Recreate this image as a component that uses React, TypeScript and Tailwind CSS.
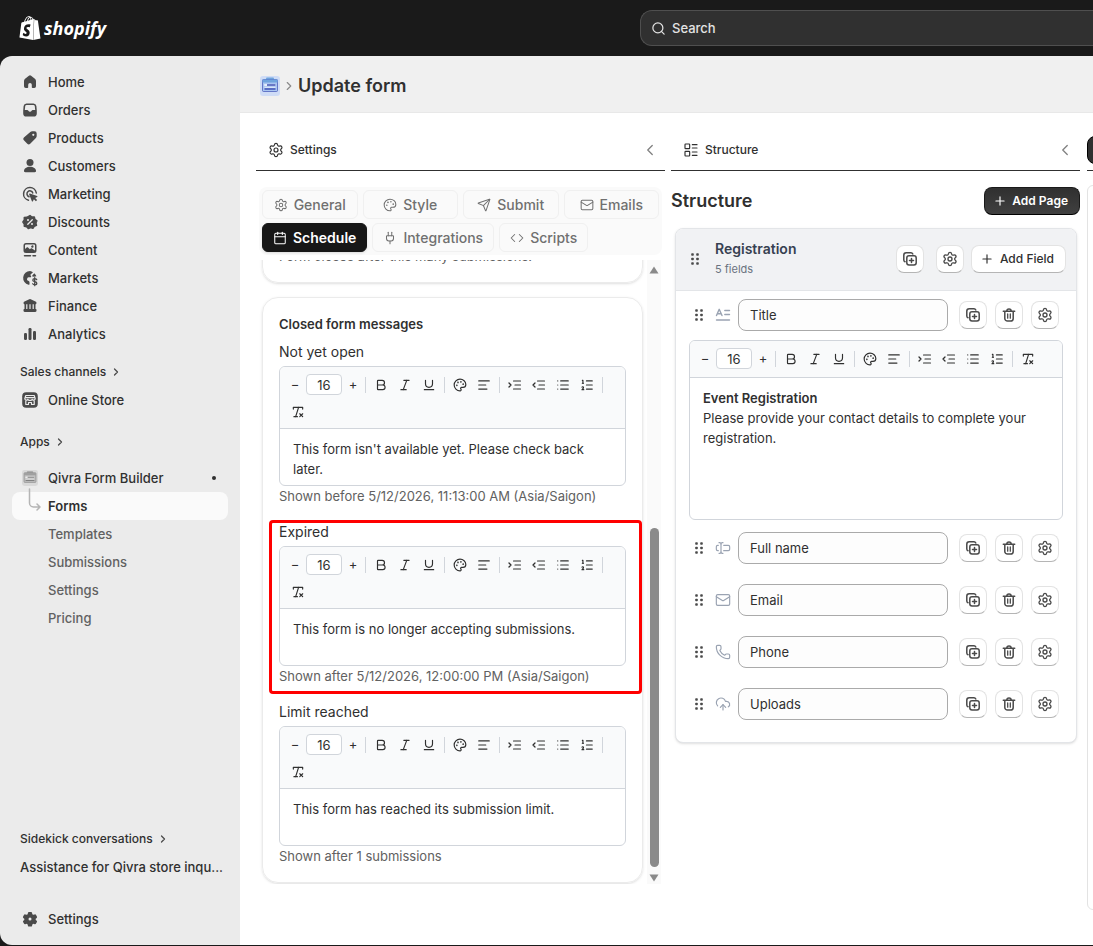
import type { ReactNode } from 'react'
import {
  Bold,
  Calendar,
  ChevronLeft,
  ChevronRight,
  CloudUpload,
  Code,
  Italic,
  LayoutList,
  List,
  ListOrdered,
  Mail,
  Palette,
  Phone,
  Plug,
  Plus,
  RemoveFormatting,
  Search,
  Send,
  Settings,
  TextAlignStart,
  TextCursorInput,
  Underline,
} from 'lucide-react'
import { SiShopify } from 'react-icons/si'

const navIcons: Record<string, ReactNode> = {
  Home: (
    <path d="M8.900 3.700a1.700 1.700 0 0 1 2.200 0l3.800 3.100c.7.600 1.100 1.400 1.100 2.300v5.200a1.700 1.700 0 0 1-1.700 1.700h-1.700a.8.8 0 0 1-.8-.8v-2.400a1.800 1.800 0 0 0-3.600 0v2.400a.8.8 0 0 1-.8.8H5.700A1.700 1.700 0 0 1 4 14.300V9.100c0-.9.4-1.700 1.100-2.300z" />
  ),
  Orders: (
    <path
      fillRule="evenodd"
      d="M6.500 3.500h7a3 3 0 0 1 2.900 2.500l.4 4.500v3a3.100 3.100 0 0 1-3.100 3.100H6.300a3.100 3.100 0 0 1-3.100-3.100v-3L3.600 6a3 3 0 0 1 2.900-2.500zm.2 1.500a1.500 1.500 0 0 0-1.500 1.300L4.800 10h2.400c.6 0 .9.300 1.200.8.300.6.800 1 1.600 1s1.300-.4 1.600-1c.3-.5.6-.8 1.200-.8h2.400l-.4-3.700A1.500 1.500 0 0 0 13.300 5z"
    />
  ),
  Products: (
    <path
      fillRule="evenodd"
      d="M10.300 4.100a2.800 2.800 0 0 1 2-.8h2.200A2.200 2.200 0 0 1 16.700 5.500v2.600a2.800 2.800 0 0 1-.8 2l-5.700 5.700a2 2 0 0 1-2.900 0l-3.400-3.500a2 2 0 0 1 0-2.900zM13.300 7.900a1.100 1.100 0 1 0 0-2.200 1.100 1.100 0 0 0 0 2.200z"
    />
  ),
  Customers: (
    <>
      <circle cx="10" cy="6.500" r="3.500" />
      <path d="M4 15c0-2.600 2.700-4.200 6-4.200s6 1.600 6 4.200c0 .8-.6 1.200-1.300 1.200H5.300C4.600 16.200 4 15.800 4 15z" />
    </>
  ),
  Marketing: (
    <>
      <path d="M8.500 16.200A6.400 6.400 0 1 1 16.300 9" fill="none" stroke="currentColor" strokeWidth="1.500" strokeLinecap="round" />
      <path d="M9 12.700A3 3 0 1 1 12.800 8.900" fill="none" stroke="currentColor" strokeWidth="1.500" strokeLinecap="round" />
      <path d="M9.800 9.500l7.300 2.500c.5.200.5.800.1 1l-2 1 1.900 2-1.200 1.200-2-1.900-1 2c-.2.4-.9.400-1-.1L9.100 10.200c-.1-.4.300-.8.7-.7z" />
    </>
  ),
  Discounts: (
    <>
      <path
        d="M10 3.600l1.900 1.500 2.400-.1.600 2.400 2 1.400-1 2.200.6 2.400-2.300.9-1.300 2-2.300-.7-2.300 1-1.600-1.900-2.400-.4V12l-1.400-2 1.400-2V5.600l2.500-.3z"
        stroke="currentColor"
        strokeWidth="1.500"
        strokeLinejoin="round"
      />
      <path d="M7.800 12.300l4.500-4.600" stroke="#ebebeb" strokeWidth="1.300" strokeLinecap="round" />
      <circle cx="8" cy="8" r="1" fill="#ebebeb" />
      <circle cx="12" cy="12" r="1" fill="#ebebeb" />
    </>
  ),
  Content: (
    <>
      <path
        fillRule="evenodd"
        d="M6 3h8a2.500 2.500 0 0 1 2.500 2.500v5A2.500 2.500 0 0 1 14 13H6a2.500 2.500 0 0 1-2.500-2.500v-5A2.500 2.500 0 0 1 6 3zm0 1.500a1 1 0 0 0-1 1V9l1.700-1.500c.4-.3.900-.3 1.300 0l1.800 1.800 1-.9c.4-.3.900-.3 1.200 0L15 10.500v-5a1 1 0 0 0-1-1zm6 3.200a1.200 1.200 0 1 0 0-2.300 1.200 1.200 0 0 0 0 2.300z"
      />
      <path d="M4.500 15.700h6M13 15.700h2.500" stroke="currentColor" strokeWidth="1.500" strokeLinecap="round" />
    </>
  ),
  Markets: (
    <>
      <path d="M10 3a7 7 0 0 0-1.500 13.800c.7.100 1-.3 1-.9v-1.600c0-.6-.3-1-.8-1.300l-1-.5a1.300 1.300 0 0 1-.6-1.600l.3-.8c.2-.5.700-.8 1.200-.8h1.900c.7 0 .9-.8.500-1.300l-.4-.5c-.3-.4-.2-.9.200-1.200L13 4.200A7 7 0 0 0 10 3z" />
      <path d="M14.300 5.200L12.300 7.500c-.3.400 0 1 .5 1.100l1.200.2 2.400-.5a7 7 0 0 0-2.100-3.100z" />
      <path d="M16.700 11.600c-.4-.6-1.100-.9-2-.9-1 0-1.900.5-1.900 1.500 0 2 4 1 4 3 0 1-.9 1.600-2 1.600-.9 0-1.700-.4-2.100-1.100M14.700 9.700v8" fill="none" stroke="currentColor" strokeWidth="1.300" strokeLinecap="round" />
    </>
  ),
  Finance: (
    <path
      fillRule="evenodd"
      d="M9.300 3.200a1.700 1.700 0 0 1 1.400 0l4.800 2.300c.6.300 1 .8 1 1.400 0 .7-.5 1.200-1 1.300V13h.3c.4 0 .7.300.7.700v1.100c0 .7-.5 1.200-1.200 1.200H4.700c-.7 0-1.200-.5-1.200-1.200v-1.100c0-.4.3-.7.700-.7h.3V8.200c-.5-.1-1-.6-1-1.300 0-.6.4-1.100 1-1.400zM6.200 8.300V13h1.200V8.300zm3.200 0V13h1.200V8.300zm3.200 0V13h1.200V8.300z"
    />
  ),
  Analytics: (
    <>
      <rect x="4" y="9" width="3" height="7" rx="1.200" />
      <rect x="8.500" y="4" width="3" height="12" rx="1.200" />
      <rect x="13" y="7" width="3" height="9" rx="1.200" />
    </>
  ),
  'Online Store': (
    <>
      <rect x="2.200" y="2.200" width="15.600" height="15.600" rx="4" />
      <path
        d="M5.800 5.500h8.400l1 3.200a1.600 1.600 0 0 1-3 .6 1.700 1.700 0 0 1-2.200 1 1.700 1.700 0 0 1-2.200-1 1.600 1.600 0 0 1-3-.6zM5.800 10.800v3.700h2.700v-2h3v2h2.700v-3.700M5.500 7.600h9"
        fill="none"
        stroke="#ebebeb"
        strokeWidth="1.200"
        strokeLinejoin="round"
      />
    </>
  ),
  Settings: (
    <path
      fillRule="evenodd"
      d="M8.900 3h2.200c.5 0 .9.400 1 .9l.2 1.300 1.100.6 1.300-.4c.5-.2 1 0 1.200.4l1 1.700c.3.500.2 1-.2 1.400l-1 .8v1.200l1 .8c.4.400.5.900.2 1.400l-1 1.700c-.2.400-.7.600-1.200.4l-1.300-.4-1.100.6-.2 1.300c-.1.500-.5.900-1 .9H8.900c-.5 0-.9-.4-1-.9l-.2-1.300-1.100-.6-1.300.4c-.5.200-1 0-1.200-.4l-1-1.700c-.3-.5-.2-1 .2-1.400l1-.8V9.700l-1-.8c-.4-.4-.5-.9-.2-1.400l1-1.700c.2-.4.7-.6 1.200-.4l1.300.4 1.100-.6.2-1.300c.1-.5.500-.9 1-.9zM10 11.500a1.500 1.500 0 1 0 0-3 1.500 1.500 0 0 0 0 3z"
    />
  ),
}

const mainNav = ['Home', 'Orders', 'Products', 'Customers', 'Marketing', 'Discounts', 'Content', 'Markets', 'Finance', 'Analytics']
const appNav = ['Templates', 'Submissions', 'Settings', 'Pricing']

function NavItem({ name }: { name: string }) {
  return (
    <a href="#" className="flex h-7 items-center gap-2 px-2 text-[13px] font-medium leading-5 text-[#303030]">
      <svg viewBox="0 0 20 20" className="size-5 shrink-0 fill-current text-[#4a4a4a]">
        {navIcons[name]}
      </svg>
      {name}
    </a>
  )
}

function SectionLink({ label }: { label: string }) {
  return (
    <a href="#" className="flex h-7 items-center gap-1 px-2 text-xs font-medium text-[#303030]">
      {label}
      <ChevronRight size={12} strokeWidth={2.5} className="text-[#4a4a4a]" />
    </a>
  )
}

function AppIcon({ gray }: { gray?: boolean }) {
  const c = gray ? { bg: '#d9d9d9', top: '#a0a0a0', board: '#bdbdbd', line: '#808080' } : { bg: '#cfdcf6', top: '#6fa4dd', board: '#a9c5f0', line: '#3f51b5' }
  return (
    <svg viewBox="0 0 20 20" className={gray ? 'size-4' : 'size-5'}>
      <rect width="20" height="20" rx="3" fill={c.bg} />
      <rect x="6" y="1.500" width="8" height="3" rx="1" fill={c.top} />
      <rect x="2.500" y="3.500" width="15" height="12" rx="1" fill={c.board} stroke={c.line} strokeOpacity="0.7" />
      <rect x="2.500" y="3.500" width="15" height="3" fill={c.top} />
      <rect x="4" y="8" width="12" height="2" rx="1" fill="#fff" fillOpacity="0.7" />
      <path d="M7 9h8.500M4.500 13h11" stroke={c.line} strokeWidth="1.300" />
      <path d="M4.500 11.300h11" stroke="#fff" strokeOpacity="0.7" />
    </svg>
  )
}

function Sidebar() {
  return (
    <nav className="flex w-60 shrink-0 flex-col rounded-bl-xl rounded-tl-xl bg-[#ebebeb] p-3">
      {mainNav.map((name) => (
        <NavItem key={name} name={name} />
      ))}
      <div className="mt-2.5">
        <SectionLink label="Sales channels" />
        <NavItem name="Online Store" />
      </div>
      <div className="mt-3.5">
        <SectionLink label="Apps" />
      </div>
      <a href="#" className="mt-2 flex h-7 items-center gap-2 px-2 text-[13px] font-medium leading-5 text-[#303030]">
        <span className="flex size-5 items-center justify-center">
          <AppIcon gray />
        </span>
        <span className="flex-1">Qivra Form Builder</span>
        <span className="mr-1 size-1 rounded-full bg-[#303030]" />
      </a>
      <a href="#" className="relative flex h-7 items-center rounded-lg bg-[#fafafa] pl-9 text-[13px] font-semibold leading-5 text-[#303030]">
        {/* branch arrow from the app icon */}
        <svg viewBox="0 0 14 26" fill="none" stroke="#b5b5b5" strokeWidth="1.500" strokeLinecap="round" strokeLinejoin="round" className="absolute -top-1 left-4 h-[26px] w-3.5">
          <path d="M1.500 1v14a4 4 0 0 0 4 4H12M9 16l3 3-3 3" />
        </svg>
        Forms
      </a>
      {appNav.map((name) => (
        <a key={name} href="#" className="flex h-7 items-center pl-9 text-[13px] font-[450] leading-5 text-[#616161]">
          {name}
        </a>
      ))}
      <div className="mt-auto">
        <SectionLink label="Sidekick conversations" />
        <a href="#" className="block whitespace-nowrap pl-2 text-[13px] font-medium leading-7 text-[#303030]">
          Assistance for Qivra store inqu...
        </a>
      </div>
      <div className="mt-6">
        <NavItem name="Settings" />
      </div>
    </nav>
  )
}

function PanelHeader({ icon, title }: { icon: ReactNode; title: string }) {
  return (
    <div className="flex h-[42px] shrink-0 items-center gap-1.5 border-b border-[#303030] pl-3 pr-1.5 text-[#303030]">
      {icon}
      <h2 className="flex-1 text-xs font-medium">{title}</h2>
      <button aria-label={`Collapse ${title}`} className="text-[#808080]">
        <ChevronLeft size={18} strokeWidth={1.75} />
      </button>
    </div>
  )
}

const tabs = [
  { label: 'General', icon: Settings },
  { label: 'Style', icon: Palette },
  { label: 'Submit', icon: Send },
  { label: 'Emails', icon: Mail },
]
const moreTabs = [
  { label: 'Schedule', icon: Calendar, active: true },
  { label: 'Integrations', icon: Plug },
  { label: 'Scripts', icon: Code },
]

function SettingsTabs() {
  return (
    <div className="mx-[3px] mt-4 flex flex-col gap-1 rounded-lg bg-[#fafafa] p-[3px]">
      <div className="flex gap-[5px]">
        {tabs.map(({ label, icon: Icon }) => (
          <button key={label} className="flex h-[29px] flex-1 items-center justify-center gap-1.5 rounded-md border border-[#f0f0f0] text-sm font-medium text-[#707070]">
            <Icon size={14} strokeWidth={1.75} />
            {label}
          </button>
        ))}
      </div>
      <div className="flex gap-[5px]">
        {moreTabs.map(({ label, icon: Icon, active }) => (
          <button
            key={label}
            className={
              active
                ? 'flex h-[29px] items-center gap-1.5 rounded-md border border-[#171717] bg-[#171717] px-2.5 text-sm font-semibold text-white shadow-sm'
                : 'flex h-[29px] items-center gap-1.5 rounded-md border border-[#f0f0f0] px-2.5 text-sm font-medium text-[#707070]'
            }
          >
            <Icon size={14} strokeWidth={1.75} />
            {label}
          </button>
        ))}
      </div>
    </div>
  )
}

function IndentIcon({ out }: { out?: boolean }) {
  return (
    <svg viewBox="0 0 14 14" width="14" height="14" fill="none" stroke="currentColor" strokeLinecap="round" strokeLinejoin="round">
      <path d={out ? 'M3 5L1 7l2 2' : 'M1 5l2 2-2 2'} strokeWidth="1.300" />
      <path d="M5.500 3H12.500M7 7H12.500M5.500 11H12.500" strokeWidth="1.200" />
    </svg>
  )
}

function Separator() {
  return <span className="mx-px h-4 w-px bg-[#d1d5db]" />
}

function ToolButton({ label, children }: { label: string; children: ReactNode }) {
  return (
    <button aria-label={label} className="flex h-[25px] w-5 items-center justify-center">
      {children}
    </button>
  )
}

function RichEditor({ label, tall, children }: { label: string; tall?: boolean; children: ReactNode }) {
  return (
    <div className="overflow-hidden rounded-md border border-[#d1d5db] bg-white text-[#303030]">
      <div className={`flex flex-wrap items-center gap-x-1 gap-y-0.5 border-b border-[#d1d5db] bg-[#f9fafb] px-2 pt-[5px] ${tall ? 'pb-1.5' : 'pb-1'}`}>
        <button aria-label="Decrease size" className="w-3.5 text-center text-[13px]">
          −
        </button>
        <input
          type="text"
          defaultValue="16"
          aria-label={`${label} font size`}
          className="h-[21px] w-9 rounded border border-[#d1d5db] bg-white text-center text-[13px]"
        />
        <button aria-label="Increase size" className="w-3.5 text-center text-[13px]">
          +
        </button>
        <Separator />
        <ToolButton label="Bold"><Bold size={14} /></ToolButton>
        <ToolButton label="Italic"><Italic size={14} /></ToolButton>
        <ToolButton label="Underline"><Underline size={14} /></ToolButton>
        <Separator />
        <ToolButton label="Text color"><Palette size={14} /></ToolButton>
        <ToolButton label="Align"><TextAlignStart size={14} /></ToolButton>
        <Separator />
        <ToolButton label="Indent"><IndentIcon /></ToolButton>
        <ToolButton label="Outdent"><IndentIcon out /></ToolButton>
        <ToolButton label="Bulleted list"><List size={14} /></ToolButton>
        <ToolButton label="Numbered list"><ListOrdered size={14} /></ToolButton>
        <Separator />
        <ToolButton label="Clear formatting"><RemoveFormatting size={14} /></ToolButton>
      </div>
      <div
        contentEditable
        suppressContentEditableWarning
        role="textbox"
        aria-label={label}
        className={`px-[13px] pt-2.5 text-[13px] leading-5 ${tall ? 'min-h-[141px]' : 'min-h-14'}`}
      >
        {children}
      </div>
    </div>
  )
}

const messages = [
  { label: 'Not yet open', text: "This form isn't available yet. Please check back later.", help: 'Shown before 5/12/2026, 11:13:00 AM (Asia/Saigon)' },
  { label: 'Expired', text: 'This form is no longer accepting submissions.', help: 'Shown after 5/12/2026, 12:00:00 PM (Asia/Saigon)', marked: true },
  { label: 'Limit reached', text: 'This form has reached its submission limit.', help: 'Shown after 1 submissions' },
]

function SettingsPanel() {
  return (
    <section className="flex min-w-0 flex-1 flex-col">
      <PanelHeader icon={<Settings size={16} strokeWidth={1.75} />} title="Settings" />
      <SettingsTabs />
      <div className="ml-[3px] mr-1 mt-[5px] flex min-h-0 flex-1">
        <div className="flex min-w-0 flex-1 flex-col justify-end overflow-hidden pb-px pl-[3px] pr-1">
          <div className="rounded-2xl border border-[#ebebeb] p-4 shadow-sm">
            <p className="text-[13px] leading-5 text-[#616161]">Form closes after this many submissions.</p>
          </div>
          <div className="mt-3.5 rounded-2xl border border-[#ebebeb] p-4 shadow-sm">
            <h3 className="text-[13px] font-semibold leading-5 text-[#303030]">Closed form messages</h3>
            <div className="mt-2 flex flex-col gap-4">
              {messages.map(({ label, text, help, marked }) => (
                <div key={label} className="relative">
                  <p className="mb-1 text-sm leading-5 text-[#303030]">{label}</p>
                  <RichEditor label={label}>{text}</RichEditor>
                  <p className="text-[13px] leading-5 text-[#616161]">{help}</p>
                  {marked && <div className="pointer-events-none absolute -bottom-2 -left-2.5 -right-4 -top-0.5 rounded-sm border-3 border-[#ff0000]" />}
                </div>
              ))}
            </div>
          </div>
        </div>
        {/* scrollbar */}
        <div className="flex w-3.5 flex-col items-center bg-[#fafafa] pb-0.5 pt-1.5">
          <svg viewBox="0 0 10 8" className="h-2 w-2.5 fill-[#8a8a8a]">
            <path d="M5 0.500L9.500 7.500H0.500z" />
          </svg>
          <div className="mb-[7px] mt-auto h-[339px] w-[9px] rounded-full bg-[#8a8a8a]" />
          <svg viewBox="0 0 10 8" className="h-2 w-2.5 fill-[#8a8a8a]">
            <path d="M5 7.500L0.500 0.500H9.500z" />
          </svg>
        </div>
      </div>
    </section>
  )
}

function DragDots() {
  return (
    <svg viewBox="0 0 20 20" className="size-5 shrink-0 fill-[#4a4a4a]">
      {[5.5, 10, 14.5].map((y) => (
        <g key={y}>
          <rect x="6.200" y={y - 1.3} width="2.600" height="2.600" rx="0.800" />
          <rect x="11.200" y={y - 1.3} width="2.600" height="2.600" rx="0.800" />
        </g>
      ))}
    </svg>
  )
}

function DuplicateIcon() {
  return (
    <svg viewBox="0 0 16 16" width="16" height="16" fill="none" stroke="currentColor" strokeWidth="1.500" strokeLinecap="round" strokeLinejoin="round">
      <path d="M3 10.800a2 2 0 0 1-1.200-1.800V4.200a2.400 2.400 0 0 1 2.400-2.400H9a2 2 0 0 1 1.800 1.200" />
      <rect x="4.800" y="4.800" width="9.400" height="9.200" rx="2.200" />
      <path d="M9.500 7.400v4M7.500 9.400h4" />
    </svg>
  )
}

function DeleteIcon() {
  return (
    <svg viewBox="0 0 16 16" width="16" height="16" fill="none" stroke="currentColor" strokeWidth="1.500" strokeLinecap="round" strokeLinejoin="round">
      <path d="M2.300 4.300h11.400M5.800 4.100a2.200 2.200 0 0 1 4.400 0M3.800 4.500v6.900a2.700 2.700 0 0 0 2.700 2.700h3a2.700 2.700 0 0 0 2.700-2.700V4.500" />
      <path d="M6.700 7v4.200M9.300 7v4.200" strokeWidth="1.300" />
    </svg>
  )
}

function IconButton({ label, children }: { label: string; children: ReactNode }) {
  return (
    <button
      aria-label={label}
      className="flex size-7 shrink-0 items-center justify-center rounded-lg border border-[#e3e3e3] border-b-[#b5b5b5] bg-white text-[#4a4a4a]"
    >
      {children}
    </button>
  )
}

function TitleIcon() {
  return (
    <svg viewBox="0 0 16 16" width="16" height="16" fill="none" stroke="currentColor" strokeWidth="1.400" strokeLinecap="round" strokeLinejoin="round">
      <path d="M1.500 8.500L4.200 2.300 7 8.500M2.400 6.700h3.700M9.800 3.500h4.700M9.800 7.500h4.700M1.500 13h13" />
    </svg>
  )
}

const fields = [
  { name: 'Full name', icon: <TextCursorInput size={16} strokeWidth={1.75} /> },
  { name: 'Email', icon: <Mail size={16} strokeWidth={1.75} /> },
  { name: 'Phone', icon: <Phone size={16} strokeWidth={1.75} /> },
  { name: 'Uploads', icon: <CloudUpload size={16} strokeWidth={1.75} /> },
]

function FieldRow({ name, icon }: { name: string; icon: ReactNode }) {
  return (
    <div className="flex items-center pr-1">
      <DragDots />
      <span className="ml-1.5 mr-[7px] text-[#9aa3b2]">{icon}</span>
      <input
        type="text"
        defaultValue={name}
        aria-label={`${name} label`}
        className="h-8 min-w-0 flex-1 rounded-lg border border-[#aaaaaa] bg-[#fdfdfd] px-[11px] text-[13px] text-[#303030]"
      />
      <div className="ml-[11px] flex gap-2">
        <IconButton label={`Duplicate ${name}`}><DuplicateIcon /></IconButton>
        <IconButton label={`Delete ${name}`}><DeleteIcon /></IconButton>
        <IconButton label={`${name} settings`}><Settings size={16} strokeWidth={2} /></IconButton>
      </div>
    </div>
  )
}

function StructurePanel() {
  return (
    <section className="min-w-0 flex-1">
      <PanelHeader icon={<LayoutList size={16} strokeWidth={1.75} />} title="Structure" />
      <div className="mt-4 flex items-center justify-between">
        <h2 className="text-lg font-semibold leading-7 text-[#303030]">Structure</h2>
        <button className="flex h-7 items-center gap-[5px] rounded-lg border border-[#1a1a1a] border-b-black bg-linear-to-b from-[#303030] to-[#404040] pl-2 pr-[11px] text-xs font-semibold text-white">
          <Plus size={14} />
          Add Page
        </button>
      </div>
      <div className="ml-1 mr-[3px] mt-[13px] overflow-hidden rounded-lg border border-[#e3e5e8] bg-white shadow-sm">
        <div className="flex h-[62px] items-center border-b border-[#e3e5e8] bg-[#f1f2f4] pb-0.5 pl-[9px] pr-2.5">
          <DragDots />
          <div className="ml-2.5 flex-1">
            <h3 className="text-sm font-semibold leading-5 text-[#374151]">Registration</h3>
            <p className="text-[11px] leading-5 text-[#6b7280]">5 fields</p>
          </div>
          <IconButton label="Duplicate page"><DuplicateIcon /></IconButton>
          <span className="ml-3 mr-[7px]">
            <IconButton label="Page settings"><Settings size={16} strokeWidth={2} /></IconButton>
          </span>
          <button className="flex h-7 items-center gap-1.5 rounded-lg border border-[#e3e3e3] border-b-[#b5b5b5] bg-white pl-2 pr-[11px] text-xs font-medium text-[#303030]">
            <Plus size={14} />
            Add Field
          </button>
        </div>
        <div className="px-[13px] pb-[22px] pt-2">
          <FieldRow name="Title" icon={<TitleIcon />} />
          <div className="mb-3 mt-[9px]">
            <RichEditor label="Title content" tall>
              <b className="font-semibold">Event Registration</b>
              <br />
              Please provide your contact details to complete your registration.
            </RichEditor>
          </div>
          <div className="flex flex-col gap-5">
            {fields.map((field) => (
              <FieldRow key={field.name} {...field} />
            ))}
          </div>
        </div>
      </div>
    </section>
  )
}

export default function App() {
  return (
    <div className="flex h-screen min-h-[900px] flex-col overflow-hidden bg-[#1a1a1a] font-['Inter',sans-serif]">
      <header className="flex h-14 shrink-0 items-center justify-between pl-[18px]">
        <a href="#" className="flex items-center gap-0.5 text-white">
          <SiShopify size={24} />
          <span className="font-['Open_Sans',sans-serif] text-lg font-bold italic leading-6">shopify</span>
        </a>
        <button className="flex h-9 w-[453px] items-center gap-1.5 rounded-l-xl border border-r-0 border-[#4f4f4f] bg-[#303030] pl-2.5 text-[13px] font-medium leading-5 text-[#e3e3e3]">
          <Search size={15} />
          Search
        </button>
      </header>
      <div className="mb-px flex min-h-0 flex-1">
        <Sidebar />
        <main className="flex min-w-0 flex-1 flex-col bg-white">
          <div className="flex h-[57px] shrink-0 items-center border-b border-[#e8e8e8] bg-[#f0f0f0] pl-5 pt-1">
            <AppIcon />
            <ChevronRight size={14} className="mx-0.5 text-[#8a8a8a]" />
            <h1 className="text-lg font-semibold text-[#303030]">Update form</h1>
          </div>
          <div className="flex min-h-0 flex-1 gap-1.5 pb-[61px] pl-4 pt-4">
            <SettingsPanel />
            <StructurePanel />
            {/* preview panel, running off the right edge */}
            <section className="-mb-[26px] flex w-[7px] shrink-0 flex-col overflow-hidden pl-px">
              <div className="flex h-[42px] shrink-0 items-center border-b border-[#303030]">
                <button aria-label="Preview" className="h-7 w-20 shrink-0 rounded-l-lg border border-black bg-[#303030]" />
              </div>
              <div className="mt-3.5 w-20 flex-1 rounded-md border border-[#e3e3e3]" />
            </section>
          </div>
        </main>
      </div>
    </div>
  )
}
